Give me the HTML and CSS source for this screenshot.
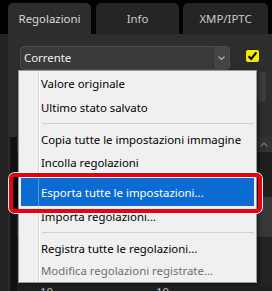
FILE: index.html
```html
<!DOCTYPE html>
<html>
<head>
<meta charset="utf-8">
<link rel="stylesheet" href="styles.css">
</head>
<body>
<div class="app">
  <div class="tabs">
    <div class="tab active">Regolazioni</div>
    <div class="tab">Info</div>
    <div class="tab wide">XMP/IPTC</div>
  </div>
  <div class="panel">
    <div class="dd-row">
      <div class="dropdown">
        <span class="dd-value">Corrente</span>
        <span class="dd-arrow"><svg width="7" height="4" viewBox="0 0 7 4"><path d="M0.5 0.5 L3.5 3.5 L6.5 0.5" fill="none" stroke="#b0b0b0" stroke-width="1.2"/></svg></span>
      </div>
      <div class="check"><svg width="11" height="10" viewBox="0 0 11 10"><path d="M1.6 5.2 L4.2 8 L9.4 1.4" fill="none" stroke="#000" stroke-width="2.1"/></svg></div>
    </div>
    <div class="spin-row"><div class="spinner"></div></div>
    <div class="section-head"><svg width="8" height="5" viewBox="0 0 8 5"><path d="M0.5 4.5 L4 1 L7.5 4.5" fill="none" stroke="#7a7a7a" stroke-width="1.1"/></svg></div>
    <div class="content">
      <div class="slot"></div>
      <div class="slot light"></div>
      <div class="slot low"></div>
      <div class="values"><span class="val">10</span><span class="val">10</span></div>
    </div>
  </div>

  <div class="menu">
    <div class="item first">Valore originale</div>
    <div class="item">Ultimo stato salvato</div>
    <div class="sep"></div>
    <div class="item">Copia tutte le impostazioni immagine</div>
    <div class="item">Incolla regolazioni</div>
    <div class="item hl">Esporta tutte le impostazioni...</div>
    <div class="item after-hl">Importa regolazioni...</div>
    <div class="sep tall"></div>
    <div class="item short">Registra tutte le regolazioni...</div>
    <div class="item disabled">Modifica regolazioni registrate...</div>
  </div>
  <div class="callout"></div>
</div>
</body>
</html>
```
FILE: styles.css
```css
html, body {
  margin: 0;
  background: #000;
}
body {
  font-family: "Noto Sans", "Open Sans", sans-serif;
  font-size: 11.4px;
  overflow: hidden;
}
.app {
  position: relative;
  width: 272px;
  height: 291px;
  overflow: hidden;
  display: flex;
  flex-direction: column;
}
.tabs {
  display: flex;
  gap: 5px;
  padding: 3px 0 0 8px;
  height: 31px;
  flex: none;
}
.tab {
  width: 83px;
  height: 31px;
  border-radius: 5px 5px 0 0;
  background: #252525;
  color: #cdcdcd;
  display: flex;
  align-items: center;
  justify-content: center;
}
.tab.active {
  background: #2d2d2d;
  color: #dadada;
}
.tab.wide {
  width: 85px;
  margin-left: -1px;
}
.panel {
  flex: 1;
  background: #2d2d2d;
  border-left: 8px solid #232323;
  display: flex;
  flex-direction: column;
}
.dd-row {
  display: flex;
  align-items: flex-start;
  padding: 12px 0 0 12px;
  height: 24px;
}
.dropdown {
  width: 210px;
  height: 24px;
  box-sizing: border-box;
  border: 1px solid #4c4c4c;
  border-radius: 4px;
  background: #3a3a3a;
  display: flex;
}
.dd-value {
  flex: 1;
  padding-left: 3px;
  color: #f2f2f2;
  line-height: 22px;
}
.dd-arrow {
  width: 15px;
  border-left: 1px solid #2f2f2f;
  background: #444;
  border-radius: 0 3px 3px 0;
  display: flex;
  align-items: center;
  justify-content: center;
}
.check {
  margin: 3px 0 0 15px;
  width: 15px;
  height: 14px;
  box-sizing: border-box;
  border: 1px solid #2a2a00;
  border-radius: 3px;
  background: #f6ea00;
  display: flex;
  align-items: center;
  justify-content: center;
}
.spin-row {
  margin-top: 2px;
  height: 30px;
  display: flex;
  justify-content: flex-end;
  padding-right: 6px;
}
.spinner {
  width: 9px;
  background: #3d3d3d;
  border-radius: 3px;
}
.section-head {
  margin-top: 35px;
  height: 15px;
  background: linear-gradient(to right, #2a2a2a 0, #2a2a2a 2px, #111 2px, #111 9px, #333 9px);
  display: flex;
  align-items: center;
  justify-content: flex-end;
  padding-right: 4px;
}
.content {
  flex: 1;
  background: linear-gradient(to right, #2a2a2a 0, #2a2a2a 2px, #111 2px, #111 9px, #1f1f1f 9px);
  display: flex;
  flex-direction: column;
}
.slot {
  height: 45px;
}
.slot.light {
  height: 40px;
  margin-left: 9px;
  background: #383838;
}
.slot.low {
  height: 49px;
  margin-left: 9px;
  background: #232323;
}
.values {
  display: flex;
  padding-left: 32px;
  color: #bdbdbd;
  line-height: 12px;
}
.val {
  width: 123px;
}

/* popup menu */
.menu {
  position: absolute;
  left: 18px;
  top: 70px;
  width: 239px;
  height: 213px;
  box-sizing: border-box;
  border: 1px solid #999;
  background-color: #f0f0f0;
  background-image: linear-gradient(to right, transparent 19px, #d5d5d5 19px, #d5d5d5 20px, #fff 20px, #fff 21px, transparent 21px);
  box-shadow: 2px 2px 4px rgba(0, 0, 0, 0.5);
  display: flex;
  flex-direction: column;
  z-index: 2;
}
.item {
  height: 23px;
  flex: none;
  display: flex;
  align-items: center;
  padding-left: 22px;
  color: #000;
  white-space: nowrap;
}
.item.first {
  height: 25px;
}
.item.hl {
  height: 28px;
  margin: 4px 2px 0;
  padding-left: 20px;
  background-color: #0b6bd3;
  background-image: linear-gradient(to right, transparent 17px, rgba(255,255,255,0.3) 17px, rgba(255,255,255,0.3) 18px, transparent 18px);
  color: #fff;
}
.item.after-hl {
  height: 21px;
}
.item.short {
  height: 22px;
}
.item.disabled {
  color: #6f6f6f;
}
.sep {
  height: 9px;
  flex: none;
  display: flex;
  align-items: center;
  padding: 0 2px 0 23px;
}
.sep.tall {
  height: 10px;
}
.sep::after {
  content: "";
  flex: 1;
  height: 1px;
  background: #d0d0d0;
}

/* red highlight callout over the menu */
.callout {
  position: absolute;
  left: 9px;
  top: 173px;
  width: 253px;
  height: 40px;
  box-sizing: border-box;
  border: 4px solid #e60012;
  border-radius: 6px;
  box-shadow: 0 0 0 1px rgba(255, 255, 255, 0.9);
  background: linear-gradient(to right, #000 0, #000 5px, transparent 5px) no-repeat;
  z-index: 3;
}
```
